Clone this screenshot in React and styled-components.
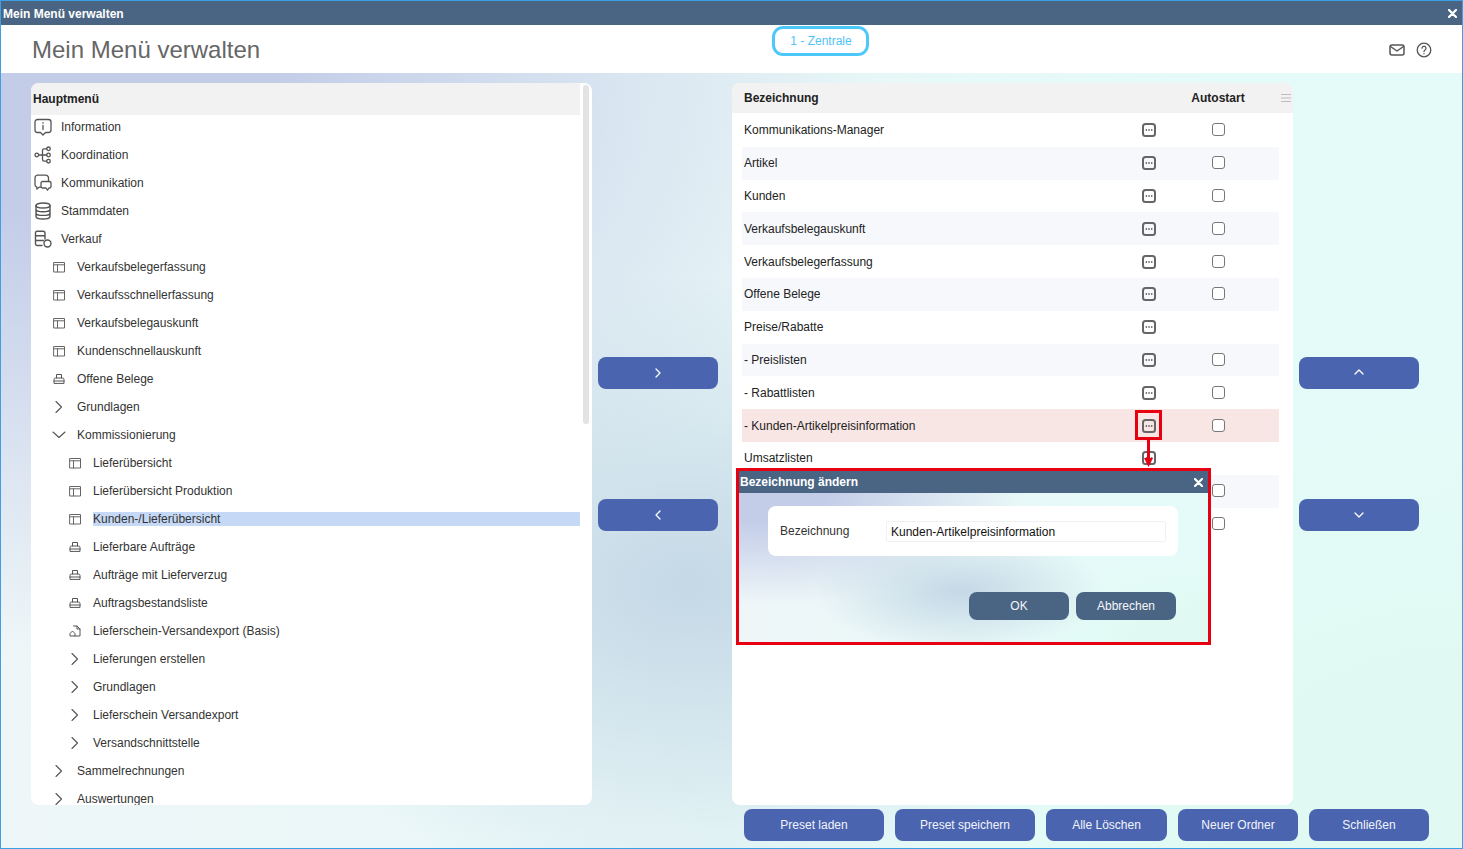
import React from 'react';
import styled, { createGlobalStyle, css } from 'styled-components';

const GlobalStyle = createGlobalStyle`
    html, body {
        margin: 0;
        padding: 0;
        height: 100%;
        overflow: hidden;
        font-family: "Liberation Sans", Arial, sans-serif;
        font-size: 12px;
    }
    * { box-sizing: border-box; }
`;

const meshBackground = css`
    background:
        radial-gradient(31% 40% at 47% 66%, #c4d8e6 0%, rgba(196, 216, 230, 0) 100%),
        radial-gradient(55% 75% at 5% 0%, #c3cde8 25%, rgba(195, 205, 232, 0) 100%),
        radial-gradient(40% 60% at 100% 100%, #e0faf3 40%, rgba(224, 250, 243, 0) 100%),
        linear-gradient(100deg, #eff6f8 0%, #e8f7f7 50%, #e5fbf9 78%);
`;

const Window = styled.div`
    position: relative;
    width: 1463px;
    height: 849px;
    border: 1px solid #3f9fe3;
    display: flex;
    flex-direction: column;
    background: #fff;
    overflow: hidden;
`;
const TitleBar = styled.div`
    flex: none;
    height: ${props => props.$height || 24}px;
    background: #4a6583;
    color: #fff;
    font-weight: bold;
    font-size: 12px;
    display: flex;
    align-items: center;
    justify-content: space-between;
    padding: ${props => props.$padTop || 0}px 5px 0 ${props => props.$padLeft || 2}px;
`;
const Header = styled.div`
    flex: none;
    height: 48px;
    display: flex;
    align-items: flex-start;
    padding: 0 31px;
    background: #fff;
`;
const PageTitle = styled.h1`
    flex: 0 0 740px;
    margin: 0;
    font-size: 24px;
    line-height: 49px;
    font-weight: normal;
    color: #666;
`;
const Chip = styled.div`
    width: 97px;
    height: 30px;
    margin-top: 1px;
    padding-left: 1px;
    border: 3px solid #4dc8fb;
    border-radius: 11px;
    color: #4fc2f8;
    font-size: 12px;
    display: flex;
    align-items: center;
    justify-content: center;
`;
const HeaderIcons = styled.div`
    margin-left: auto;
    margin-right: -1px;
    padding-top: 17px;
    display: flex;
    gap: 11px;
`;
const Body = styled.div`
    flex: 1;
    display: flex;
    flex-direction: column;
    padding: 10px 0 0 30px;
    ${meshBackground}
`;
const Columns = styled.div`
    display: flex;
    height: 722px;
`;
const Panel = styled.div`
    position: relative;
    flex: none;
    width: 561px;
    height: 722px;
    background: #fff;
    border-radius: 8px;
    overflow: hidden;
`;
const Scrollbar = styled.div`
    position: absolute;
    top: 2px;
    left: 552px;
    width: 6px;
    height: 339px;
    border-radius: 3px;
    background: #e3e3e3;
`;
const TreeHeader = styled.div`
    width: 549px;
    height: 32px;
    background: #f2f2f2;
    font-weight: bold;
    color: #222;
    padding-left: 2px;
    line-height: 32px;
`;
const TreeList = styled.div`
    width: 549px;
    margin-top: -2px;
    position: relative;
`;
const TreeRow = styled.div`
    height: 28px;
    display: flex;
    align-items: center;
    padding-left: ${props => 2 + props.$level * 16}px;
    color: #333;
`;
const TreeIcon = styled.span`
    flex: 0 0 20px;
    height: 20px;
    margin-right: 8px;
    display: flex;
    align-items: center;
    justify-content: center;
`;
const TreeLabel = styled.span`
    flex: 1;
    height: 14px;
    line-height: 14px;
    background: ${props => (props.$selected ? '#c5d9f6' : 'transparent')};
`;
const ArrowColumn = styled.div`
    flex: none;
    width: 120px;
    margin: 0 ${props => (props.$last ? 0 : 14)}px 0 6px;
    padding-top: 274px;
    display: flex;
    flex-direction: column;
    gap: 110px;
`;
const BlueButton = styled.button`
    flex: none;
    width: ${props => props.$width || 120}px;
    height: 32px;
    border: none;
    border-radius: 8px;
    background: #4a64b0;
    color: #f2f4fb;
    font-family: inherit;
    font-size: 12px;
    padding: 0;
    display: flex;
    align-items: center;
    justify-content: center;
`;
const TableHeader = styled.div`
    height: 30px;
    background: #f2f2f2;
    display: grid;
    grid-template-columns: 444px 60px 1fr;
    align-items: center;
    padding-left: 12px;
    font-weight: bold;
    color: #222;
`;
const AutostartHead = styled.span`
    text-align: center;
`;
const HeadMenu = styled.span`
    justify-self: end;
    margin-right: 2px;
    display: flex;
`;
const TableBody = styled.div`
    width: 537px;
    margin-left: 10px;
    padding-top: 1px;
`;
const TableRow = styled.div`
    height: 32.8px;
    display: grid;
    grid-template-columns: 395px 20px 49px 20px;
    align-items: center;
    padding-left: 2px;
    color: #222;
    background: ${props => (props.$highlight ? '#f8e6e5' : props.$striped ? '#f7f8fc' : '#fff')};
`;
const DotsSlot = styled.span`
    grid-column: 2;
    display: flex;
    justify-content: center;
`;
const CheckBox = styled.input.attrs({ type: 'checkbox' })`
    grid-column: 4;
    justify-self: center;
    appearance: none;
    width: 13px;
    height: 13px;
    margin: 0 0 1px;
    border: 1.5px solid #777;
    border-radius: 3px;
    background: #fff;
`;
const BottomBar = styled.div`
    display: flex;
    gap: 11px;
    margin: 4px 0 0 713px;
`;
const Dialog = styled.div`
    position: absolute;
    left: 735px;
    top: 467px;
    width: 475px;
    height: 177px;
    border: 3px solid #e60012;
    display: flex;
    flex-direction: column;
    background: #fff;
`;
const DialogBody = styled.div`
    flex: 1;
    padding: 13px 30px 0 29px;
    display: flex;
    flex-direction: column;
    border-radius: 0 0 4px 4px;
    ${meshBackground}
`;
const DialogCard = styled.div`
    height: 50px;
    background: #fff;
    border-radius: 8px;
    display: flex;
    align-items: center;
    padding: 0 12px;
    color: #333;
`;
const DialogLabel = styled.label`
    flex: 0 0 106px;
`;
const DialogInput = styled.input`
    flex: 1;
    height: 21px;
    border: 1px solid #f1f1f1;
    border-radius: 2px;
    padding: 1px 4px 0;
    font-family: inherit;
    font-size: 12px;
    color: #111;
    background: #fff;
    outline: none;
`;
const DialogActions = styled.div`
    margin-top: 36px;
    display: flex;
    justify-content: flex-end;
    gap: 7px;
    padding-right: 2px;
`;
const DialogButton = styled.button`
    width: 100px;
    height: 28px;
    border: none;
    border-radius: 8px;
    background: #4a6583;
    color: #f4f6f9;
    font-family: inherit;
    font-size: 12px;
    padding: 0;
`;
const MarkerBox = styled.div`
    position: absolute;
    left: 1134px;
    top: 409px;
    width: 27px;
    height: 30px;
    border: 3px solid #e60012;
`;
const MarkerArrow = styled.svg`
    position: absolute;
    left: 1141px;
    top: 438px;
`;

const Svg = ({ size = 18, width, height, children, color = '#555', sw = 1.3 }) => (
    <svg
        width={width || size}
        height={height || size}
        viewBox={`0 0 ${width || size} ${height || size}`}
        fill="none"
        stroke={color}
        strokeWidth={sw}
        strokeLinecap="round"
        strokeLinejoin="round"
    >
        {children}
    </svg>
);

const icons = {
    info: (
        <Svg>
            <path d="M3.5 1.500h11a2.500 2.500 0 0 1 2.500 2.500v8a2.500 2.500 0 0 1-2.500 2.500h-3L9 17l-2.500-2.500h-3A2.500 2.500 0 0 1 1 12V4a2.500 2.500 0 0 1 2.500-2.500z" />
            <path d="M9 7.500v4M9 4.600v.6" />
        </Svg>
    ),
    network: (
        <Svg>
            <circle cx="2.800" cy="9" r="1.800" />
            <circle cx="14.500" cy="2.800" r="1.800" />
            <circle cx="14.500" cy="9" r="1.800" />
            <circle cx="14.500" cy="15.200" r="1.800" />
            <path d="M4.600 9h8.100M8.500 9V4.500a1.700 1.700 0 0 1 1.700-1.700h2.500M8.500 9v4.500a1.700 1.700 0 0 0 1.700 1.700h2.500" />
        </Svg>
    ),
    chat: (
        <Svg>
            <path d="M14.500 7V4A2.800 2.800 0 0 0 11.700 1.200H3.800A2.800 2.800 0 0 0 1 4v6.500a2.800 2.800 0 0 0 1.800 2.600V15l2.400-1.800H7" />
            <path d="M8.500 7.500h7a1.500 1.500 0 0 1 1.500 1.500v3.500a1.500 1.500 0 0 1-1.500 1.500h-.5l-1.500 2.200-1.500-2.200H8.500A1.500 1.500 0 0 1 7 12.500V9a1.500 1.500 0 0 1 1.500-1.500z" />
        </Svg>
    ),
    database: (
        <Svg sw={1.4}>
            <ellipse cx="9" cy="3.500" rx="7" ry="2.500" />
            <path d="M2 3.500v11c0 1.400 3.100 2.500 7 2.500s7-1.100 7-2.500v-11M2 7.200c0 1.400 3.100 2.500 7 2.500s7-1.100 7-2.500M2 10.900c0 1.400 3.100 2.500 7 2.500s7-1.100 7-2.500" />
        </Svg>
    ),
    sales: (
        <Svg sw={1.4}>
            <path d="M8 15.500H3A1.500 1.500 0 0 1 1.500 14V2.800A1.500 1.500 0 0 1 3 1.300h6a2 2 0 0 1 2 2V9M1.500 5.800h9.500M1.500 10.500h8" />
            <circle cx="13.500" cy="13.500" r="3.500" />
        </Svg>
    ),
    table: (
        <Svg size={12} sw={1} color="#666">
            <path d="M1 1.500h10.500v9.500H1zM1 3.800h10.500M4.500 3.800V11" />
        </Svg>
    ),
    print: (
        <Svg size={12} sw={1} color="#555">
            <path d="M3.500 5V1.500h5V5M1 10V6.500A1.500 1.500 0 0 1 2.500 5h7A1.500 1.500 0 0 1 11 6.500V10zM1 8h10" />
        </Svg>
    ),
    doc: (
        <Svg size={12} sw={1}>
            <path d="M4.500 1H8l3 3v7H1V8.500L3.500 6 6 8.500V11M8 1v3h3" />
        </Svg>
    ),
    right: (
        <Svg size={14} sw={1.1}>
            <path d="M4 1.500L9.500 7 4 12.500" />
        </Svg>
    ),
    down: (
        <Svg size={14} sw={1.1}>
            <path d="M1 4l6 5.500L13 4" />
        </Svg>
    ),
};

const CloseX = () => (
    <Svg size={9} color="#fff" sw={2.2}>
        <path d="M1 1l7 7M8 1L1 8" />
    </Svg>
);

const Dots = () => (
    <Svg size={14} color="#666" sw={2}>
        <rect x="1" y="1" width="12" height="12" rx="2.500" />
        <path d="M4.300 7h.1M7 7h.1M9.700 7h.1" stroke="#333" strokeWidth="1.600" />
    </Svg>
);

const Chevron = ({ dir }) => {
    const paths = {
        right: 'M3 1l4 4-4 4',
        left: 'M7 1L3 5l4 4',
        up: 'M1 6l4-4 4 4',
        down: 'M1 3l4 4 4-4',
    };
    return (
        <Svg size={10} color="#fff" sw={1.3}>
            <path d={paths[dir]} />
        </Svg>
    );
};

const treeItems = [
    { label: 'Information', icon: 'info', level: 0 },
    { label: 'Koordination', icon: 'network', level: 0 },
    { label: 'Kommunikation', icon: 'chat', level: 0 },
    { label: 'Stammdaten', icon: 'database', level: 0 },
    { label: 'Verkauf', icon: 'sales', level: 0 },
    { label: 'Verkaufsbelegerfassung', icon: 'table', level: 1 },
    { label: 'Verkaufsschnellerfassung', icon: 'table', level: 1 },
    { label: 'Verkaufsbelegauskunft', icon: 'table', level: 1 },
    { label: 'Kundenschnellauskunft', icon: 'table', level: 1 },
    { label: 'Offene Belege', icon: 'print', level: 1 },
    { label: 'Grundlagen', icon: 'right', level: 1 },
    { label: 'Kommissionierung', icon: 'down', level: 1 },
    { label: 'Lieferübersicht', icon: 'table', level: 2 },
    { label: 'Lieferübersicht Produktion', icon: 'table', level: 2 },
    { label: 'Kunden-/Lieferübersicht', icon: 'table', level: 2, selected: true },
    { label: 'Lieferbare Aufträge', icon: 'print', level: 2 },
    { label: 'Aufträge mit Lieferverzug', icon: 'print', level: 2 },
    { label: 'Auftragsbestandsliste', icon: 'print', level: 2 },
    { label: 'Lieferschein-Versandexport (Basis)', icon: 'doc', level: 2 },
    { label: 'Lieferungen erstellen', icon: 'right', level: 2 },
    { label: 'Grundlagen', icon: 'right', level: 2 },
    { label: 'Lieferschein Versandexport', icon: 'right', level: 2 },
    { label: 'Versandschnittstelle', icon: 'right', level: 2 },
    { label: 'Sammelrechnungen', icon: 'right', level: 1 },
    { label: 'Auswertungen', icon: 'right', level: 1 },
];

// the last two names sit behind the dialog, so they stay empty
const tableRows = [
    { name: 'Kommunikations-Manager', check: true },
    { name: 'Artikel', check: true },
    { name: 'Kunden', check: true },
    { name: 'Verkaufsbelegauskunft', check: true },
    { name: 'Verkaufsbelegerfassung', check: true },
    { name: 'Offene Belege', check: true },
    { name: 'Preise/Rabatte', check: false },
    { name: '- Preislisten', check: true },
    { name: '- Rabattlisten', check: true },
    { name: '- Kunden-Artikelpreisinformation', check: true, highlight: true },
    { name: 'Umsatzlisten', check: false },
    { name: '', check: true },
    { name: '', check: true },
];

export default function App() {
    return (
        <Window>
            <GlobalStyle />
            <TitleBar $padTop={1}>
                <span>Mein Menü verwalten</span>
                <CloseX />
            </TitleBar>
            <Header>
                <PageTitle>Mein Menü verwalten</PageTitle>
                <Chip>1 - Zentrale</Chip>
                <HeaderIcons>
                    <Svg size={16} sw={1.5}>
                        <rect x="1" y="3" width="14" height="10" rx="2" />
                        <path d="M1.500 4.500L8 9l6.500-4.500" />
                    </Svg>
                    <Svg size={16} sw={1.3}>
                        <circle cx="8" cy="8" r="6.800" />
                        <path d="M6 6.200a2 2 0 1 1 3 1.800c-.7.400-1 .8-1 1.500M8 11.600v.2" />
                    </Svg>
                </HeaderIcons>
            </Header>
            <Body>
                <Columns>
                    <Panel>
                        <TreeHeader>Hauptmenü</TreeHeader>
                        <TreeList>
                            {treeItems.map((item, index) => (
                                <TreeRow key={index} $level={item.level}>
                                    <TreeIcon>{icons[item.icon]}</TreeIcon>
                                    <TreeLabel $selected={item.selected}>{item.label}</TreeLabel>
                                </TreeRow>
                            ))}
                        </TreeList>
                        <Scrollbar />
                    </Panel>
                    <ArrowColumn>
                        <BlueButton><Chevron dir="right" /></BlueButton>
                        <BlueButton><Chevron dir="left" /></BlueButton>
                    </ArrowColumn>
                    <Panel>
                        <TableHeader>
                            <span>Bezeichnung</span>
                            <AutostartHead>Autostart</AutostartHead>
                            <HeadMenu>
                                <Svg width={10} height={10} color="#bdbdbd" sw={1}>
                                    <path d="M0 1.500h10M0 5h10M0 8.500h10" />
                                </Svg>
                            </HeadMenu>
                        </TableHeader>
                        <TableBody>
                            {tableRows.map((row, index) => (
                                <TableRow key={index} $striped={index % 2 === 1} $highlight={row.highlight}>
                                    <span>{row.name}</span>
                                    <DotsSlot><Dots /></DotsSlot>
                                    {row.check && <CheckBox />}
                                </TableRow>
                            ))}
                        </TableBody>
                    </Panel>
                    <ArrowColumn $last>
                        <BlueButton><Chevron dir="up" /></BlueButton>
                        <BlueButton><Chevron dir="down" /></BlueButton>
                    </ArrowColumn>
                </Columns>
                <BottomBar>
                    <BlueButton $width={140}>Preset laden</BlueButton>
                    <BlueButton $width={140}>Preset speichern</BlueButton>
                    <BlueButton $width={121}>Alle Löschen</BlueButton>
                    <BlueButton $width={120}>Neuer Ordner</BlueButton>
                    <BlueButton $width={120}>Schließen</BlueButton>
                </BottomBar>
            </Body>
            <MarkerBox />
            <MarkerArrow width="12" height="30" viewBox="0 0 12 30">
                <path d="M6.500 0v20" stroke="#e60012" strokeWidth="3" />
                <path d="M2 19h9l-4.500 9z" fill="#e60012" />
            </MarkerArrow>
            <Dialog>
                <TitleBar $height={22} $padLeft={1}>
                    <span>Bezeichnung ändern</span>
                    <CloseX />
                </TitleBar>
                <DialogBody>
                    <DialogCard>
                        <DialogLabel>Bezeichnung</DialogLabel>
                        <DialogInput readOnly value="Kunden-Artikelpreisinformation" />
                    </DialogCard>
                    <DialogActions>
                        <DialogButton>OK</DialogButton>
                        <DialogButton>Abbrechen</DialogButton>
                    </DialogActions>
                </DialogBody>
            </Dialog>
        </Window>
    );
}
